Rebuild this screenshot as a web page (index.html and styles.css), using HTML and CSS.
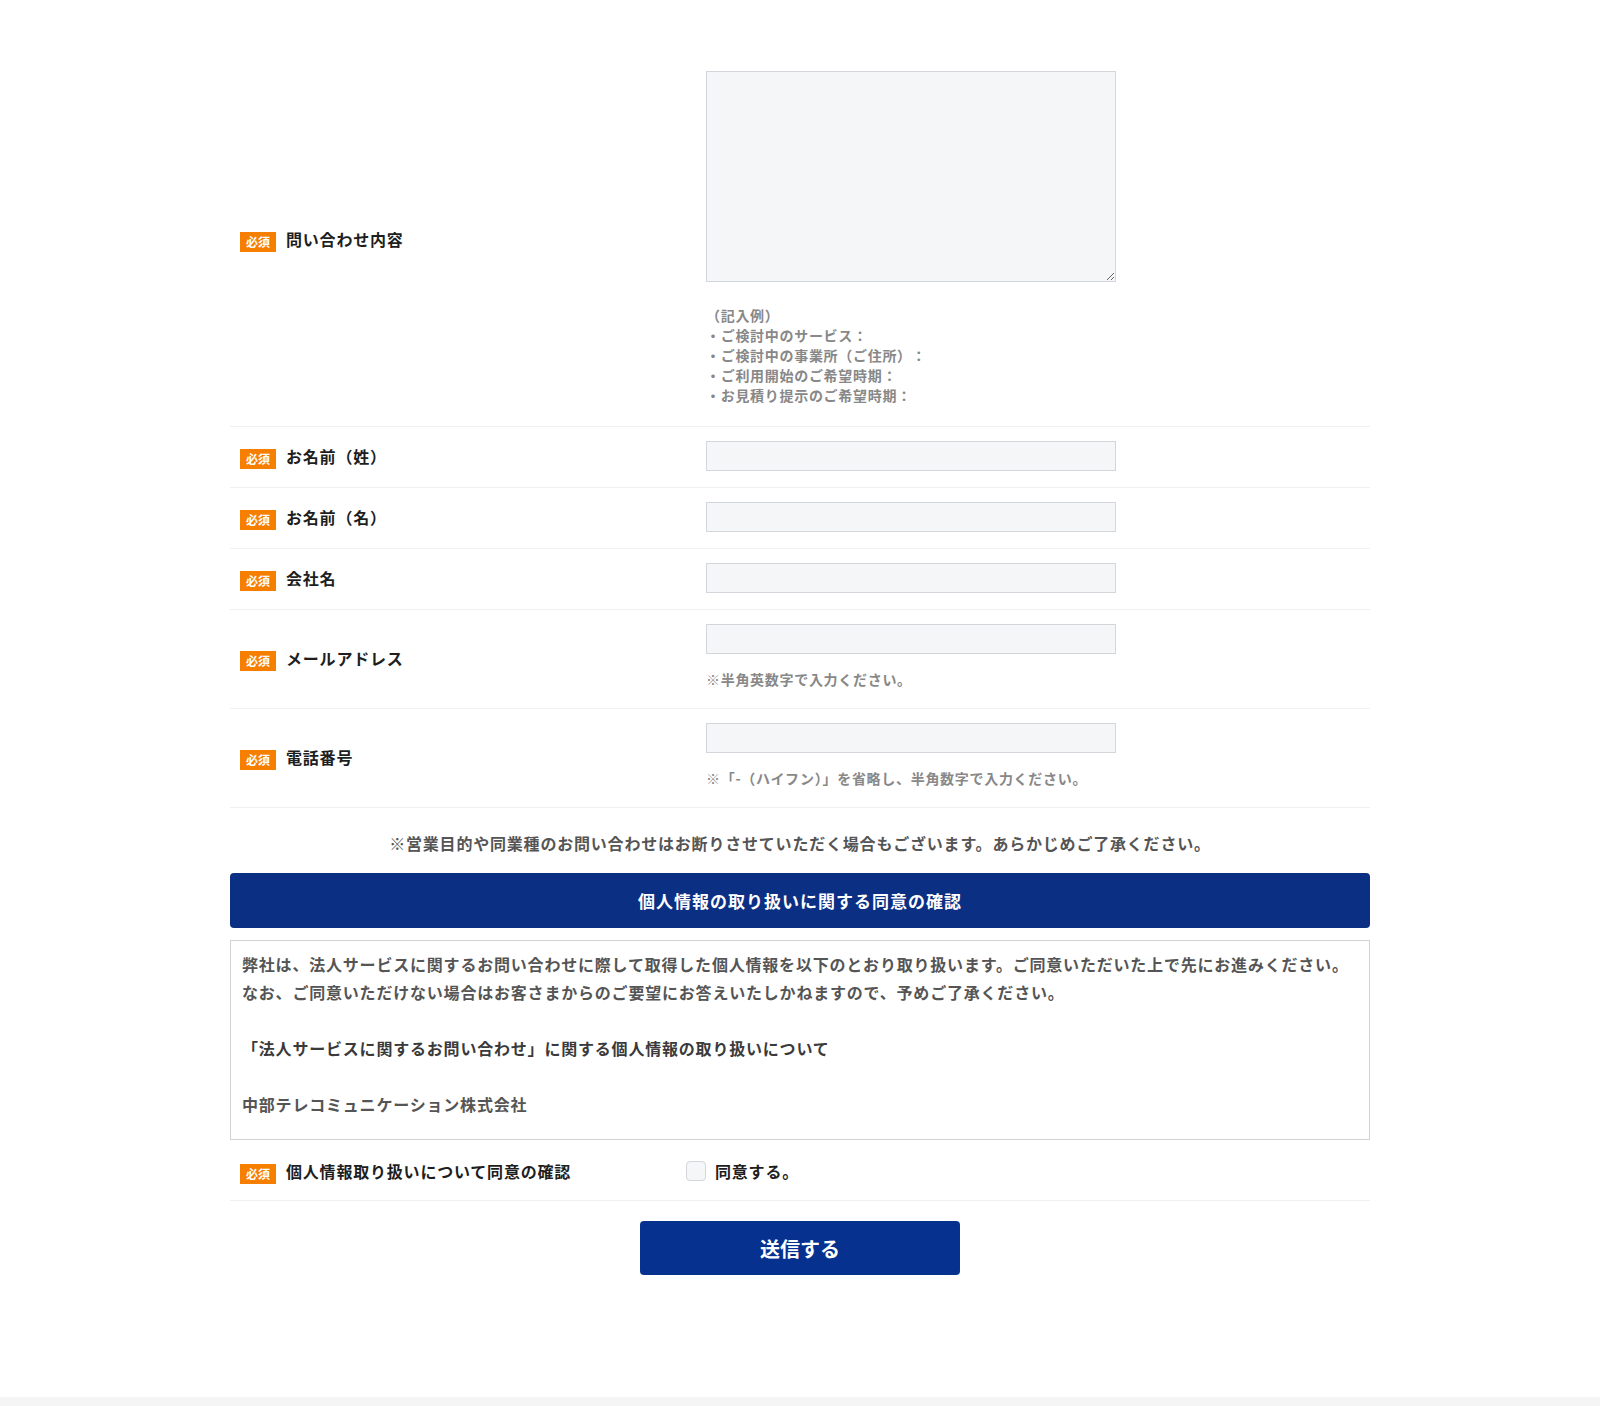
FILE: index.html
```html
<!DOCTYPE html>
<html lang="ja">
<head>
<meta charset="utf-8">
<title>お問い合わせ</title>
<link rel="stylesheet" href="styles.css">
</head>
<body>
<main class="page">
  <form class="form">
    <div class="row row-textarea">
      <div class="label"><span class="badge">必須</span><span>問い合わせ内容</span></div>
      <div class="field">
        <textarea class="input textarea"></textarea>
        <div class="hint">（記入例）<br>・ご検討中のサービス：<br>・ご検討中の事業所（ご住所）：<br>・ご利用開始のご希望時期：<br>・お見積り提示のご希望時期：</div>
      </div>
    </div>
    <div class="row">
      <div class="label"><span class="badge">必須</span><span>お名前（姓）</span></div>
      <div class="field"><input class="input" type="text"></div>
    </div>
    <div class="row">
      <div class="label"><span class="badge">必須</span><span>お名前（名）</span></div>
      <div class="field"><input class="input" type="text"></div>
    </div>
    <div class="row">
      <div class="label"><span class="badge">必須</span><span>会社名</span></div>
      <div class="field"><input class="input" type="text"></div>
    </div>
    <div class="row">
      <div class="label"><span class="badge">必須</span><span>メールアドレス</span></div>
      <div class="field">
        <input class="input" type="text">
        <div class="note">※半角英数字で入力ください。</div>
      </div>
    </div>
    <div class="row">
      <div class="label"><span class="badge">必須</span><span>電話番号</span></div>
      <div class="field">
        <input class="input" type="text">
        <div class="note note-trim">※「-（ハイフン）」を省略し、半角数字で入力ください。</div>
      </div>
    </div>

    <p class="notice">※営業目的や同業種のお問い合わせはお断りさせていただく場合もございます。あらかじめご了承ください。</p>

    <h2 class="privacy-title">個人情報の取り扱いに関する同意の確認</h2>
    <div class="privacy-box">
      <p>弊社は、法人サービスに関するお問い合わせに際して取得した個人情報を以下のとおり取り扱います。ご同意いただいた上で先にお進みください。<br>なお、ご同意いただけない場合はお客さまからのご要望にお答えいたしかねますので、予めご了承ください。</p>
      <p class="privacy-head">「法人サービスに関するお問い合わせ」に関する個人情報の取り扱いについて</p>
      <p>中部テレコミュニケーション株式会社</p>
    </div>

    <div class="row consent">
      <div class="label"><span class="badge">必須</span><span>個人情報取り扱いについて同意の確認</span></div>
      <label class="agree"><input class="check" type="checkbox"><span>同意する。</span></label>
    </div>

    <div class="submit-wrap">
      <button class="submit" type="button">送信する</button>
    </div>
  </form>
</main>
<footer class="footer"></footer>
</body>
</html>
```
FILE: styles.css
```css
* { box-sizing: border-box; }

body {
  margin: 0;
  background: #fff;
  color: #222;
  font-family: "Noto Sans CJK JP", "Noto Sans", sans-serif;
  text-spacing-trim: space-all;
}

.page {
  width: 1140px;
  margin: 0 auto;
  padding-top: 57px;
}

.form { margin: 0; }

.row {
  display: grid;
  grid-template-columns: 456px 1fr;
  align-items: center;
  padding: 14px 0 16px;
  border-bottom: 1px solid #f0f0f0;
}

.label {
  display: flex;
  align-items: center;
  padding-left: 10px;
  font-size: 16px;
  font-weight: 700;
  line-height: 22px;
  letter-spacing: 0.05em;
  color: #1e1e1e;
}

.row-textarea .label { margin-bottom: 4px; }

.badge {
  display: inline-block;
  width: 36px;
  height: 20px;
  margin-top: 6px;
  margin-right: 10px;
  background: #f77f00;
  color: #fff;
  font-size: 12px;
  line-height: 20px;
  letter-spacing: 0;
  text-align: center;
  flex: none;
}

.field { padding-left: 20px; }

.input {
  display: block;
  width: 410px;
  height: 30px;
  margin: 0;
  padding: 4px 8px;
  background: #f5f6f8;
  border: 1px solid #d3d6db;
  border-radius: 0;
  font: inherit;
  outline: none;
}

.textarea { height: 211px; }

.hint {
  margin-top: 23px;
  margin-bottom: 5px;
  font-size: 14px;
  font-weight: 700;
  line-height: 20px;
  letter-spacing: 0.05em;
  color: #888;
}

.note {
  margin-top: 15px;
  margin-bottom: 3px;
  font-size: 14px;
  font-weight: 700;
  line-height: 20px;
  letter-spacing: 0.05em;
  color: #888;
}

.note-trim { text-spacing-trim: normal; }

.notice {
  margin: 21px 0 0;
  font-size: 16px;
  font-weight: 700;
  line-height: 28px;
  letter-spacing: 0.05em;
  color: #555;
  text-align: center;
}

.privacy-title {
  margin: 16px 0 0;
  height: 55px;
  background: #0b2f83;
  border-radius: 4px;
  color: #fff;
  font-size: 17px;
  font-weight: 700;
  line-height: 55px;
  letter-spacing: 1px;
  text-align: center;
}

.privacy-box {
  margin-top: 12px;
  height: 200px;
  overflow: hidden;
  padding: 9px 4px 9px 11px;
  border: 1px solid #d2d2d2;
  font-size: 16px;
  font-weight: 700;
  line-height: 28px;
  letter-spacing: 0.05em;
  color: #555;
}

.privacy-box p { margin: 0 0 28px; }

.privacy-head { color: #3a3a3a; }

.consent { margin-top: 4px; }

.agree {
  display: flex;
  align-items: center;
  gap: 9px;
  font-size: 16px;
  font-weight: 700;
  letter-spacing: 0.05em;
  color: #1e1e1e;
}

.check {
  appearance: none;
  -webkit-appearance: none;
  width: 20px;
  height: 20px;
  margin: 0;
  background: #f5f6f8;
  border: 1px solid #d3d6db;
  border-radius: 4px;
}

.submit-wrap {
  display: flex;
  justify-content: center;
  padding: 20px 0 122px;
}

.submit {
  width: 320px;
  height: 54px;
  border: 0;
  border-radius: 4px;
  background: #06318f;
  color: #fff;
  font-family: inherit;
  font-size: 20px;
  font-weight: 700;
  letter-spacing: 0;
}

.footer {
  height: 9px;
  background: #f5f5f5;
}
```
